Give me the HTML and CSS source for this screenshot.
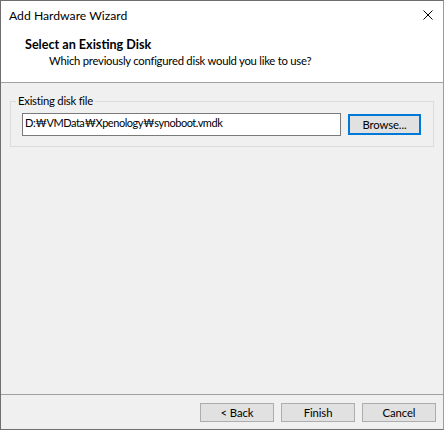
FILE: index.html
```html
<!DOCTYPE html>
<html>
<head>
<meta charset="utf-8">
<link rel="stylesheet" href="styles.css">
</head>
<body>
<div class="window">
  <div class="header">
    <div class="titlebar">
      <span class="title">Add Hardware Wizard</span>
      <svg class="close" width="10" height="10" viewBox="0 0 10 10"><path d="M0.5 0.5 L9.5 9.5 M9.5 0.5 L0.5 9.5" stroke="#000" stroke-width="1" fill="none"/></svg>
    </div>
    <div class="heading">Select an Existing Disk</div>
    <div class="subheading">Which previously configured disk would you like to use?</div>
  </div>
  <div class="content">
    <fieldset class="group">
      <legend class="group-label">Existing disk file</legend>
      <div class="group-row">
        <div class="textbox">D:₩VMData₩Xpenology₩synoboot.vmdk</div>
        <div class="button default">Browse...</div>
      </div>
    </fieldset>
  </div>
  <div class="footer">
    <div class="button">&lt; Back</div>
    <div class="button">Finish</div>
    <div class="button">Cancel</div>
  </div>
</div>
</body>
</html>
```

FILE: styles.css
```css
* { box-sizing: border-box; }
html, body { margin: 0; padding: 0; }
body {
  font-family: Lato, "Liberation Sans", "Noto Sans CJK KR", sans-serif;
  font-size: 11.3px;
  letter-spacing: -0.1px;
  line-height: 16px;
  color: #000;
}
.window {
  width: 444px;
  height: 430px;
  border: 1px solid #6f6f6f;
  border-right-color: #9c9c9c;
  background: #f0f0f0;
  display: flex;
  flex-direction: column;
}
.header {
  background: #fff;
  height: 82px;
  border-bottom: 1px solid #a0a0a0;
  padding-top: 7px;
}
.titlebar {
  display: flex;
  justify-content: space-between;
  align-items: flex-start;
  padding-left: 8px;
  padding-right: 10px;
}
.title { font-size: 12.2px; letter-spacing: 0; }
.close { margin-top: 2px; }
.heading {
  margin-top: 13px;
  padding-left: 24px;
  font-weight: bold;
  font-size: 12.6px;
  letter-spacing: 0;
}
.subheading {
  padding-left: 48px;
  letter-spacing: -0.25px;
}
.content {
  flex: 1;
  padding: 10px 9px 0 9px;
}
.group {
  margin: 0;
  border: 1px solid #dcdcdc;
  padding: 4px 0 10px 0;
  min-width: 0;
}
.group-label {
  margin-left: 5px;
  padding: 0 2px;
  letter-spacing: -0.25px;
}
.group-row {
  display: flex;
  align-items: center;
  gap: 7px;
  padding: 0 12px 0 11px;
}
.textbox {
  width: 319px;
  height: 23px;
  border: 1px solid #7a7a7a;
  background: #fff;
  padding: 1px 2px;
  white-space: nowrap;
  font-size: 11px;
  letter-spacing: -0.45px;
}
.button {
  width: 74px;
  height: 19px;
  background: #e1e1e1;
  border: 1px solid #adadad;
  display: flex;
  align-items: center;
  justify-content: center;
}
.button.default {
  width: 73px;
  height: 21px;
  border: 2px solid #0078d7;
}
.footer {
  height: 35px;
  border-top: 1px solid #a0a0a0;
  display: flex;
  justify-content: flex-end;
  gap: 7px;
  padding: 8px 7px 0 0;
}
```
